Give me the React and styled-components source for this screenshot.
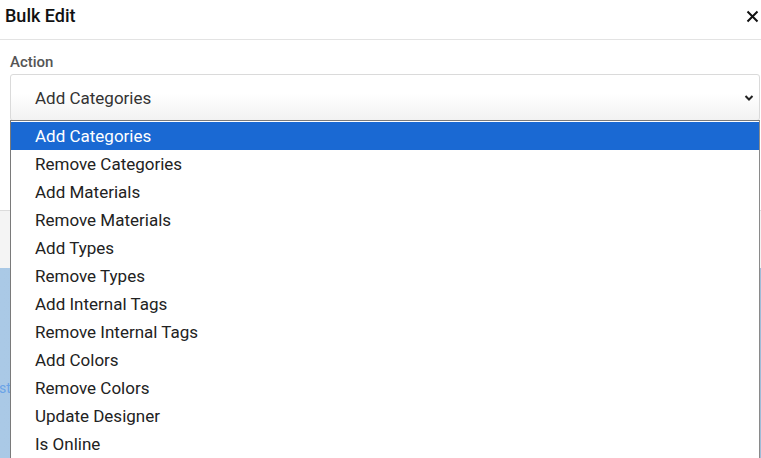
import React from "react";
import styled, { createGlobalStyle } from "styled-components";

const GlobalStyle = createGlobalStyle`
  html, body {
    margin: 0;
    padding: 0;
    width: 761px;
    height: 458px;
    overflow: hidden;
    background: #a9c7e3;
  }
  body {
    font-family: Roboto, "Liberation Sans", Arial, sans-serif;
  }
`;

const Page = styled.div`
  position: relative;
  display: flex;
  flex-direction: column;
  width: 761px;
  height: 458px;
`;

const Modal = styled.div`
  display: flex;
  flex-direction: column;
  height: 268px;
  width: 761px;
  background: #ffffff;
`;

const Header = styled.div`
  display: flex;
  align-items: center;
  justify-content: space-between;
  height: 40px;
  padding: 0 1px 0 5px;
  border-bottom: 1px solid #e3e3e3;
  box-sizing: border-box;
`;

const Title = styled.h2`
  margin: 0;
  font-size: 18px;
  font-weight: 500;
  color: #111;
  line-height: 1;
  margin-top: -7px;
`;

const CloseButton = styled.button`
  display: flex;
  align-items: center;
  justify-content: center;
  width: 16px;
  height: 16px;
  padding: 0;
  border: none;
  background: transparent;
  margin-top: -7px;
  cursor: pointer;
`;

const Body = styled.div`
  padding: 14px 1px 0 10px;
  height: 170px;
  box-sizing: border-box;
`;

const Label = styled.div`
  font-size: 15px;
  font-weight: 500;
  color: #555;
  line-height: 17px;
  margin-bottom: 3px;
`;

const Select = styled.div`
  display: flex;
  align-items: center;
  justify-content: space-between;
  height: 47px;
  width: 750px;
  box-sizing: border-box;
  padding: 0 5px 0 24px;
  border: 1px solid #dadada;
  border-radius: 3px;
  background: linear-gradient(#ffffff 40%, #f2f2f2);
  font-size: 17px;
  color: #333;
`;

const Footer = styled.div`
  flex: 1;
  border-top: 1px solid #dcdcdc;
  background: #f4f4f4;
`;

const Backdrop = styled.div`
  flex: 1;
  background: linear-gradient(90deg, #aac9e6, #9fbcd8);
  padding-top: 112px;
  font-size: 14px;
  color: #6aa3e6;
`;

const Faded = styled.span`
  display: inline-block;
  margin-left: -1px;
  line-height: 16px;
`;

const List = styled.ul`
  position: absolute;
  top: 120px;
  left: 10px;
  width: 750px;
  height: 345px;
  margin: 0;
  padding: 1px 0 0;
  box-sizing: border-box;
  list-style: none;
  background: #ffffff;
  border: 1px solid #7a7a7a;
  border-right-color: #8a8a8a;
  border-bottom: none;
`;

const Option = styled.li`
  height: 28px;
  line-height: 28px;
  padding-left: 24px;
  font-size: 17px;
  color: ${(p) => (p.$active ? "#ffffff" : "#222")};
  background: ${(p) => (p.$active ? "#1a69d3" : "transparent")};
`;

const options = [
  "Add Categories",
  "Remove Categories",
  "Add Materials",
  "Remove Materials",
  "Add Types",
  "Remove Types",
  "Add Internal Tags",
  "Remove Internal Tags",
  "Add Colors",
  "Remove Colors",
  "Update Designer",
  "Is Online",
];

function CloseIcon() {
  return (
    <svg width="13" height="13" viewBox="0 0 13 13">
      <path d="M1.5 1.5 L11.5 11.5 M11.5 1.5 L1.5 11.5" stroke="#111" strokeWidth="2" />
    </svg>
  );
}

function Chevron() {
  return (
    <svg width="10" height="6" viewBox="0 0 10 6">
      <path d="M1.5 1 L5 4.5 L8.5 1" stroke="#222" strokeWidth="2" fill="none" />
    </svg>
  );
}

export default function App() {
  return (
    <>
      <GlobalStyle />
      <Page>
        <Modal>
          <Header>
            <Title>Bulk Edit</Title>
            <CloseButton>
              <CloseIcon />
            </CloseButton>
          </Header>
          <Body>
            <Label>Action</Label>
            <Select>
              <span>Add Categories</span>
              <Chevron />
            </Select>
          </Body>
          <Footer />
        </Modal>
        <Backdrop>
          <Faded>st</Faded>
        </Backdrop>
        <List>
          {options.map((o, i) => (
            <Option key={o} $active={i === 0}>
              {o}
            </Option>
          ))}
        </List>
      </Page>
    </>
  );
}
